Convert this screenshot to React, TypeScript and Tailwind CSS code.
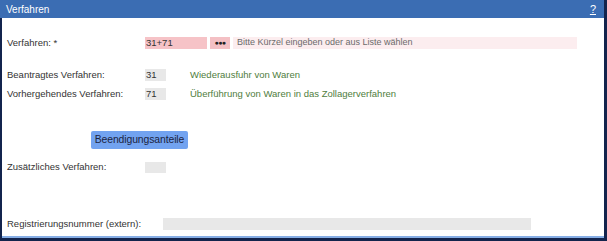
export default function App() {
  const font = { fontFamily: '"Liberation Sans", Arial, sans-serif' };

  return (
    <div className="w-[607px] h-[241px] bg-[#13244d] flex flex-col pr-[3px]" style={font}>
      <div className="h-[18px] bg-[#3b6db3] flex items-center justify-between pl-[6px] pr-[8px] text-white text-[10px]">
        <span>Verfahren</span>
        <span className="underline text-[11px]">?</span>
      </div>
      <div className="flex-1 ml-[2px] bg-white flex flex-col pl-[5px] text-[9.5px] text-[#333]">
        <div className="mt-[19px] flex items-center h-[12px]">
          <span className="w-[138px]">Verfahren: *</span>
          <div className="w-[62px] h-[12px] bg-[#f6c3c7] flex items-center pl-[1px]">31+71</div>
          <div className="ml-[3px] w-[20px] h-[12px] bg-[#f4c0c4] flex items-center justify-center text-[7px] font-bold text-[#222] tracking-[-0.5px]">
            ●●●
          </div>
          <div className="ml-[3px] w-[344px] h-[12px] bg-[#fcedef] flex items-center pl-[4px] text-[#6b6b6b] text-[9px]">
            Bitte Kürzel eingeben oder aus Liste wählen
          </div>
        </div>

        <div className="mt-[20px] flex items-center h-[12px]">
          <span className="w-[138px]">Beantragtes Verfahren:</span>
          <div className="w-[21px] h-[12px] bg-[#e8e8e8] flex items-center pl-[1px]">31</div>
          <span className="ml-[24px] text-[#4f7d3d]">Wiederausfuhr von Waren</span>
        </div>
        <div className="mt-[7px] flex items-center h-[12px]">
          <span className="w-[138px]">Vorhergehendes Verfahren:</span>
          <div className="w-[21px] h-[12px] bg-[#e8e8e8] flex items-center pl-[1px]">71</div>
          <span className="ml-[24px] text-[#4f7d3d]">Überführung von Waren in das Zollagerverfahren</span>
        </div>

        <div className="mt-[31px] ml-[84px] w-[97px] h-[18px] bg-[#72a3f0] rounded-[2px] flex items-center justify-center text-[10.4px] tracking-[-0.1px] text-[#1c2440]">
          Beendigungsanteile
        </div>

        <div className="mt-[13px] flex items-center h-[11px]">
          <span className="w-[138px]">Zusätzliches Verfahren:</span>
          <div className="w-[21px] h-[11px] bg-[#e8e8e8]" />
        </div>

        <div className="mt-[45px] flex items-center h-[12px]">
          <span className="w-[156px]">Registrierungsnummer (extern):</span>
          <div className="w-[368px] h-[12px] bg-[#e8e8e8]" />
        </div>
      </div>
      <div className="ml-[2px] h-[2px] bg-[#86aee6]" />
      <div className="h-[3px]" />
    </div>
  );
}
